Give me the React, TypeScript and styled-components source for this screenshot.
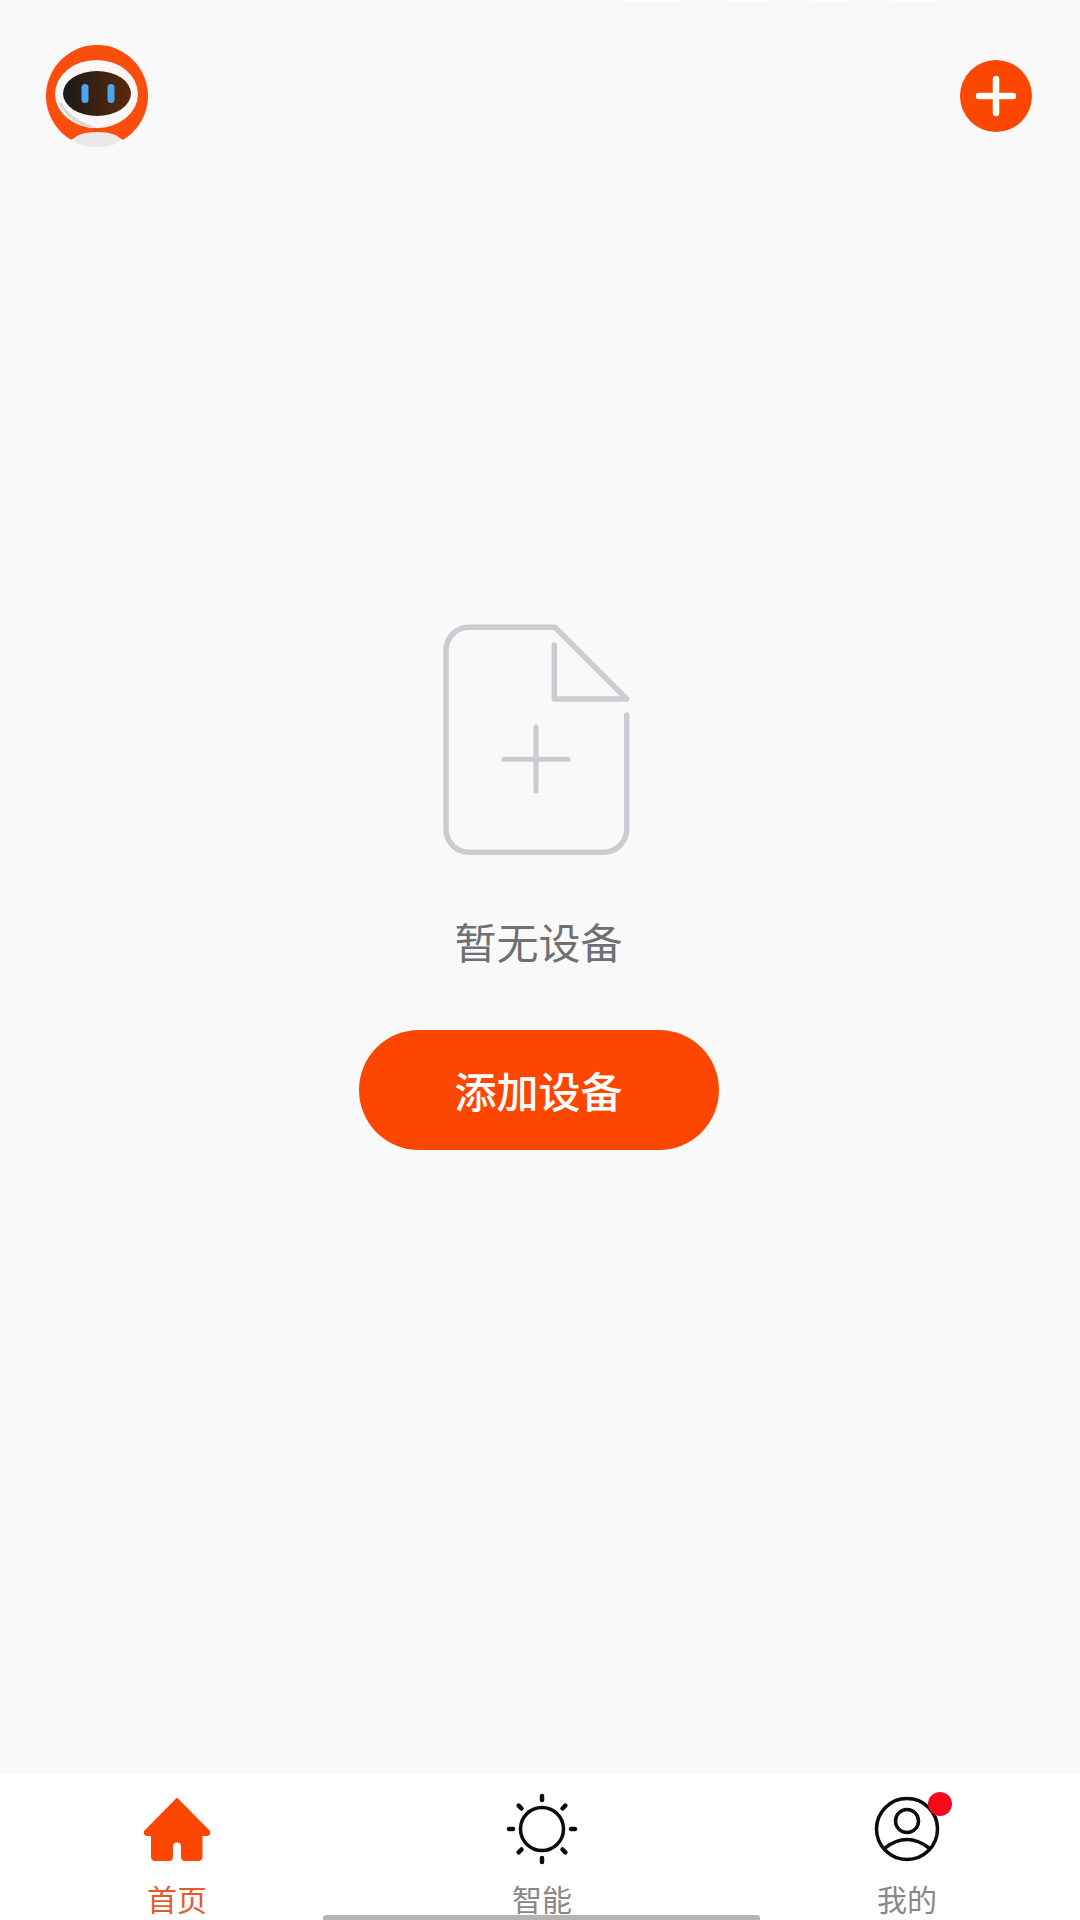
import React from "react";
import styled, { createGlobalStyle } from "styled-components";

const ORANGE = "#fd4600";
const FONT = `"Noto Sans CJK SC", "Noto Sans", sans-serif`;

const Global = createGlobalStyle`
  html, body { margin: 0; padding: 0; background: #f9f9fa; }
  * { box-sizing: border-box; }
`;

const Screen = styled.div`
  position: relative;
  width: 1080px;
  height: 1920px;
  display: flex;
  flex-direction: column;
  overflow: hidden;
  background: #f9f9fa;
  font-family: ${FONT};
`;

const Main = styled.main`
  flex: 1;
  display: flex;
  flex-direction: column;
`;

const StatusTrace = styled.div`
  height: 2px;
  padding-left: 623px;
  display: flex;
  gap: 40px;
`;

const TraceMark = styled.span<{ $w: number }>`
  width: ${(p) => p.$w}px;
  height: 1px;
  border-radius: 1px;
  background: #ffffff;
`;

const Header = styled.header`
  display: flex;
  align-items: center;
  justify-content: space-between;
  padding: 43px 48px 0 46px;
`;

const AddIconButton = styled.button`
  width: 72px;
  height: 72px;
  padding: 0;
  border: none;
  border-radius: 50%;
  background: ${ORANGE};
  display: flex;
  align-items: center;
  justify-content: center;
`;

const EmptyState = styled.section`
  display: flex;
  flex-direction: column;
  align-items: center;
  margin-top: 473px;
  padding-right: 3px;
`;

const DocIcon = styled.svg`
  display: block;
  margin-right: 2px;
`;

const EmptyText = styled.p`
  margin: 53px 0 2px;
  font-size: 42px;
  line-height: 56px;
  color: #6f7073;
`;

const AddButton = styled.button`
  width: 360px;
  height: 120px;
  margin-top: 59px;
  border: none;
  border-radius: 60px;
  background: ${ORANGE};
  color: #ffffff;
  font-family: ${FONT};
  font-size: 42px;
  font-weight: 500;
  line-height: 56px;
`;

const TabBar = styled.nav`
  height: 147px;
  flex-shrink: 0;
  background: #ffffff;
  display: flex;
  gap: 265px;
  padding: 20px 0 0 127px;
  overflow: hidden;
`;

const Tab = styled.div`
  width: 100px;
  display: flex;
  flex-direction: column;
  align-items: center;
`;

const IconSlot = styled.div`
  position: relative;
  height: 72px;
  display: flex;
  align-items: center;
  justify-content: center;
`;

const Badge = styled.span`
  position: absolute;
  left: 54px;
  top: -1px;
  width: 24px;
  height: 24px;
  border-radius: 50%;
  background: #f5091d;
`;

const TabLabel = styled.span<{ $active?: boolean }>`
  margin-top: 13px;
  font-size: 30px;
  line-height: 40px;
  color: ${(p) => (p.$active ? "#e8592a" : "#87888a")};
`;

const HomeBar = styled.div`
  position: absolute;
  left: 323px;
  bottom: 0;
  width: 437px;
  height: 5px;
  border-radius: 3px 3px 0 0;
  background: #b4b4b4;
`;

const RobotLogo = () => (
  <svg width="102" height="102" viewBox="0 0 102 102">
    <defs>
      <linearGradient id="visor" x1="0" x2="1" y1="0" y2="0">
        <stop offset="0" stopColor="#1a1a1c" />
        <stop offset="1" stopColor="#5c2a0a" />
      </linearGradient>
    </defs>
    <path d="M25 94.8 A51 51 0 1 1 77 94.8 Q51 80 25 94.8 Z" fill="#fb4e0c" />
    <ellipse cx="51" cy="94.5" rx="23" ry="7.5" fill="#ece8e8" />
    <ellipse cx="50.5" cy="49" rx="41.5" ry="34" fill="#fbf7f6" />
    <path d="M14 58 Q24 76 46 82" fill="none" stroke="#d6d8dc" strokeWidth="3" />
    <ellipse cx="51" cy="48.5" rx="34" ry="22.5" fill="url(#visor)" />
    <rect x="35.5" y="39" width="7" height="19" rx="3.5" fill="#4aa6ee" />
    <rect x="61.5" y="39" width="7" height="19" rx="3.5" fill="#4aa6ee" />
  </svg>
);

const PlusGlyph = () => (
  <svg width="42" height="42" viewBox="0 0 42 42">
    <path d="M21 4 V38 M4 21 H38" stroke="#fff" strokeWidth="6.5" strokeLinecap="round" />
  </svg>
);

const EmptyDoc = () => (
  <DocIcon width="195" height="240" viewBox="0 0 195 240" fill="none" stroke="#c9ccd0" strokeWidth="5.5">
    <path d="M186.7 95 V209.3 A23 23 0 0 1 163.7 232.3 H29 A23 23 0 0 1 6 209.3 V30.3 A23 23 0 0 1 29 7.3 H115 L186.7 79 H114.3 V25" strokeLinejoin="round" strokeLinecap="round" />
    <path d="M64 139.3 H128 M96 107 V171" strokeWidth="5" strokeLinecap="round" />
  </DocIcon>
);

const HomeIcon = () => (
  <svg width="68" height="72" viewBox="0 -4.5 68 72">
    <path d="M34 1.5 L66 34 Q67 37.5 64 37.5 H58.5 V59 Q58.5 62.5 55 62.5 H42 Q39 62.5 39 59 V49 Q39 44 34 44 Q29 44 29 49 V59 Q29 62.5 26 62.5 H12.5 Q9 62.5 9 59 V37.5 H4 Q1 37.5 2 34 Z" fill={ORANGE} stroke={ORANGE} strokeWidth="2" strokeLinejoin="round" />
  </svg>
);

const SunIcon = () => {
  const rays = [0, 45, 90, 135, 180, 225, 270, 315];
  return (
    <svg width="72" height="72" viewBox="-36 -36 72 72">
      <circle r="21.5" fill="none" stroke="#0c0c0c" strokeWidth="3.5" />
      {rays.map((a) => (
        <line key={a} x1="0" y1="-29" x2="0" y2="-33" transform={`rotate(${a})`} stroke="#0c0c0c" strokeWidth="4.5" strokeLinecap="round" />
      ))}
    </svg>
  );
};

const PersonIcon = () => (
  <svg width="66" height="72" viewBox="-33 -36 66 72" fill="none" stroke="#0c0c0c" strokeWidth="3.5">
    <circle r="30.5" />
    <circle cy="-8" r="11.5" />
    <path d="M-22 19 Q0 2 22 19" />
  </svg>
);

export default function App() {
  return (
    <Screen>
      <Global />
      <Main>
        <StatusTrace>
          <TraceMark $w={62} />
          <TraceMark $w={45} />
          <TraceMark $w={40} />
          <TraceMark $w={48} />
        </StatusTrace>
        <Header>
          <RobotLogo />
          <AddIconButton aria-label="添加">
            <PlusGlyph />
          </AddIconButton>
        </Header>
        <EmptyState>
          <EmptyDoc />
          <EmptyText>暂无设备</EmptyText>
          <AddButton>添加设备</AddButton>
        </EmptyState>
      </Main>
      <TabBar>
        <Tab>
          <IconSlot>
            <HomeIcon />
          </IconSlot>
          <TabLabel $active>首页</TabLabel>
        </Tab>
        <Tab>
          <IconSlot>
            <SunIcon />
          </IconSlot>
          <TabLabel>智能</TabLabel>
        </Tab>
        <Tab>
          <IconSlot>
            <PersonIcon />
            <Badge />
          </IconSlot>
          <TabLabel>我的</TabLabel>
        </Tab>
      </TabBar>
      <HomeBar />
    </Screen>
  );
}
